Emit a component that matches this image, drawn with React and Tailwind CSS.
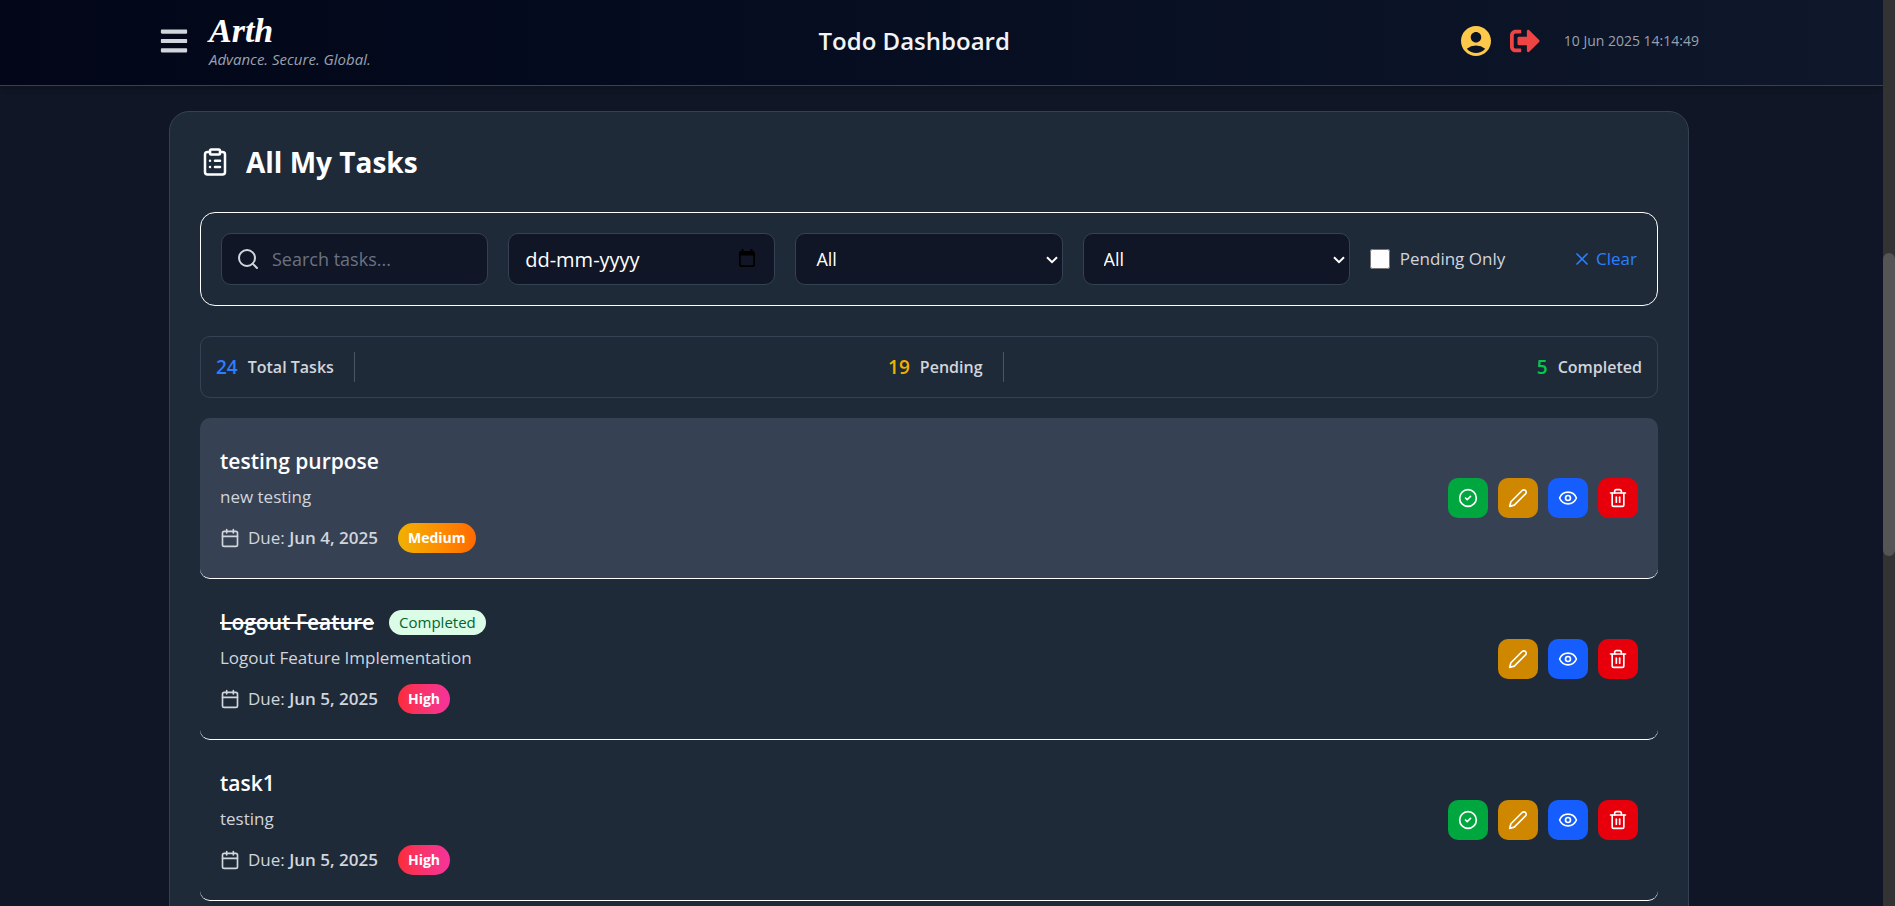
import { FaBars, FaSignOutAlt } from "react-icons/fa";
import { MdAccountCircle } from "react-icons/md";
import { FiCalendar, FiEdit2, FiSearch, FiX } from "react-icons/fi";
import { LuCircleCheck, LuClipboardList, LuEye, LuTrash2 } from "react-icons/lu";

const tasks = [
  { title: "testing purpose", text: "new testing", due: "Jun 4, 2025", priority: "Medium", done: false, active: true },
  { title: "Logout Feature", text: "Logout Feature Implementation", due: "Jun 5, 2025", priority: "High", done: true, active: false },
  { title: "task1", text: "testing", due: "Jun 5, 2025", priority: "High", done: false, active: false },
];

const field = "h-[52px] w-full min-w-0 rounded-[10px] border border-gray-700 bg-[#101625] text-white";

function IconButton({ label, color, children }) {
  return (
    <button type="button" aria-label={label} className={`flex size-10 items-center justify-center rounded-[10px] text-white ${color}`}>
      {children}
    </button>
  );
}

function Header() {
  return (
    <header className="border-b border-gray-700 bg-linear-to-r from-[#020618] to-[#0f172b] pr-[25px] shadow-md">
      <div className="mx-auto flex h-[85px] max-w-[1540px] items-center justify-between pb-1">
        <div className="flex items-center gap-5">
          <button type="button" aria-label="Menu" className="text-gray-300">
            <FaBars className="size-[30px]" />
          </button>
          <div className="flex flex-col">
            <span className="font-['Liberation_Serif',serif] text-[34px] leading-9 font-bold text-white italic">Arth</span>
            <span className="text-[15px] leading-5 text-gray-400 italic">Advance. Secure. Global.</span>
          </div>
        </div>
        <h1 className="text-[24px] font-semibold text-gray-100">Todo Dashboard</h1>
        <div className="flex items-center gap-4">
          <button type="button" aria-label="Profile" className="text-[#fec84b]">
            <MdAccountCircle className="size-9" />
          </button>
          <button type="button" aria-label="Log out" className="text-[#ef4444]">
            <FaSignOutAlt className="size-[30px]" />
          </button>
          <time className="ml-2 text-[14px] text-gray-400">10 Jun 2025 14:14:49</time>
        </div>
      </div>
    </header>
  );
}

function FilterSelect({ label }) {
  return (
    <div className="relative">
      <select aria-label={label} className={`${field} appearance-none px-5 text-[18px]`}>
        <option>All</option>
      </select>
      <svg aria-hidden="true" viewBox="0 0 12 8" className="pointer-events-none absolute top-[23px] right-[5px] h-2 w-3 fill-none stroke-white stroke-2">
        <path d="M1 1.2 6 6.2 11 1.2" />
      </svg>
    </div>
  );
}

function Filters() {
  return (
    <form className="grid grid-cols-5 items-center gap-5 rounded-[15px] border border-white p-5">
      <div className="relative">
        <FiSearch className="absolute top-[14px] left-[15px] size-6 text-gray-300" />
        <input type="text" aria-label="Search tasks" placeholder="Search tasks..." className={`${field} pr-4 pl-[50px] text-[18px] placeholder:text-gray-500`} />
      </div>
      <div className="relative">
        <input type="text" aria-label="Due date" placeholder="dd-mm-yyyy" className={`${field} px-4 text-[20px] placeholder:text-white`} />
        <svg aria-hidden="true" viewBox="0 0 16 18" className="pointer-events-none absolute top-4 right-5 h-[18px] w-4 fill-black">
          <path fillRule="evenodd" d="M2.5 0h2v2h7V0h2v2H14a2 2 0 0 1 2 2v12a2 2 0 0 1-2 2H2a2 2 0 0 1-2-2V4a2 2 0 0 1 2-2h.5zM1.7 6.5v9.8h12.6V6.500z" />
        </svg>
      </div>
      <FilterSelect label="Status" />
      <FilterSelect label="Priority" />
      <div className="flex items-center justify-between">
        <label className="flex items-center gap-[10px] text-[17px] text-gray-300">
          <input type="checkbox" className="size-5" />
          Pending Only
        </label>
        <button type="button" className="flex items-center gap-1 text-[17px] text-[#2b7fff]">
          <FiX className="size-5" />
          Clear
        </button>
      </div>
    </form>
  );
}

function Stat({ value, label, color, divider }) {
  return (
    <div className={`flex h-[30px] items-center gap-[10px] font-semibold ${divider ? "border-r border-gray-600 pr-5" : ""}`}>
      <span className={`text-[19px] ${color}`}>{value}</span>
      <span className="text-[16px] text-gray-300">{label}</span>
    </div>
  );
}

function Task({ task }) {
  return (
    <li className={`flex h-[161px] items-center justify-between rounded-[10px] border-b border-white px-5 ${task.active ? "bg-gray-700" : ""}`}>
      <div className="flex flex-col pt-[2px]">
        <div className="flex items-center gap-[15px]">
          <h3 className={`text-[21px] leading-8 font-semibold text-white ${task.done ? "line-through" : ""}`}>{task.title}</h3>
          {task.done && <span className="rounded-full bg-green-100 px-[10px] text-[15px] leading-[25px] font-medium text-green-800">Completed</span>}
        </div>
        <p className="mt-2 text-[17px] leading-6 text-gray-300">{task.text}</p>
        <div className="mt-[14px] flex items-center gap-5">
          <span className="flex items-center gap-2 text-[17px] text-gray-300">
            <FiCalendar className="size-5" />
            <span>
              Due: <span className="font-semibold">{task.due}</span>
            </span>
          </span>
          <span
            className={`rounded-full bg-linear-to-r px-[10px] text-[14px] leading-[30px] font-bold text-white ${
              task.priority === "High" ? "from-red-500 to-pink-500" : "from-yellow-500 to-orange-500"
            }`}
          >
            {task.priority}
          </span>
        </div>
      </div>
      <div className="flex gap-[10px]">
        {!task.done && (
          <IconButton label="Complete" color="bg-green-600">
            <LuCircleCheck className="size-5" />
          </IconButton>
        )}
        <IconButton label="Edit" color="bg-yellow-600">
          <FiEdit2 className="size-5" />
        </IconButton>
        <IconButton label="View" color="bg-blue-600">
          <LuEye className="size-5" />
        </IconButton>
        <IconButton label="Delete" color="bg-red-600">
          <LuTrash2 className="size-5" />
        </IconButton>
      </div>
    </li>
  );
}

export default function App() {
  return (
    <div className="flex h-screen overflow-hidden bg-[#101625] font-['Open_Sans',sans-serif]">
      <div className="min-w-0 flex-1">
        <Header />
        <main className="pt-[25px] pr-[25px]">
          <section className="mx-auto max-w-[1520px] rounded-[20px] border border-gray-700 bg-[#1f2a39] p-[30px]">
            <h2 className="mb-[30px] flex h-10 items-center gap-4 text-[28px] font-bold text-white">
              <LuClipboardList className="size-[30px]" />
              All My Tasks
            </h2>
            <Filters />
            <div className="mt-[30px] mb-5 flex items-center justify-between rounded-[10px] border border-gray-700 p-[15px]">
              <Stat value="24" label="Total Tasks" color="text-[#2b7fff]" divider />
              <Stat value="19" label="Pending" color="text-[#f0b100]" divider />
              <Stat value="5" label="Completed" color="text-[#00c950]" />
            </div>
            <ul>
              {tasks.map((task) => (
                <Task key={task.title} task={task} />
              ))}
            </ul>
          </section>
        </main>
      </div>
      <div aria-hidden="true" className="w-3 shrink-0 bg-[#333333] pt-[253px]">
        <div className="h-[303px] rounded-full bg-[#555555]" />
      </div>
    </div>
  );
}
